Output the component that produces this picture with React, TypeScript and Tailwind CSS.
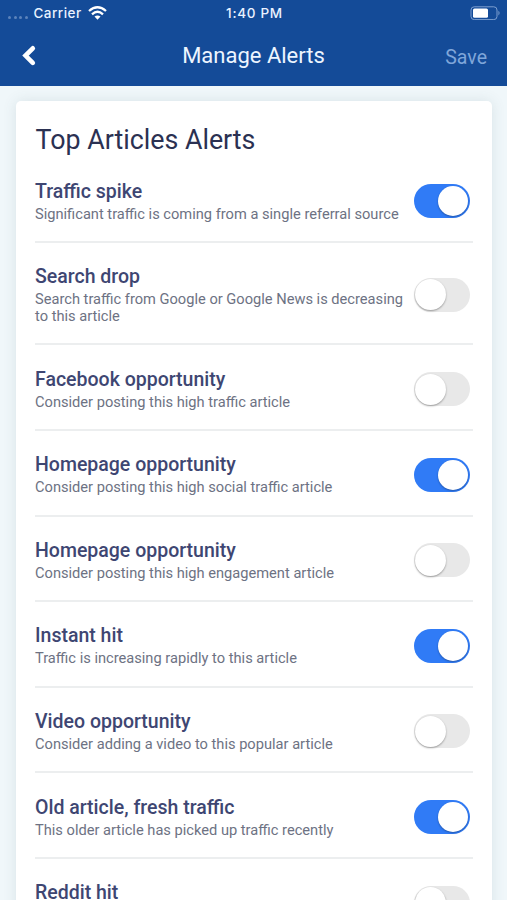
type Alert = { title: string; text: string; on: boolean };

const alerts: Alert[] = [
  { title: "Traffic spike", text: "Significant traffic is coming from a single referral source", on: true },
  { title: "Search drop", text: "Search traffic from Google or Google News is decreasing to this article", on: false },
  { title: "Facebook opportunity", text: "Consider posting this high traffic article", on: false },
  { title: "Homepage opportunity", text: "Consider posting this high social traffic article", on: true },
  { title: "Homepage opportunity", text: "Consider posting this high engagement article", on: false },
  { title: "Instant hit", text: "Traffic is increasing rapidly to this article", on: true },
  { title: "Video opportunity", text: "Consider adding a video to this popular article", on: false },
  { title: "Old article, fresh traffic", text: "This older article has picked up traffic recently", on: true },
  { title: "Reddit hit", text: "", on: false },
];

function Toggle({ on }: { on: boolean }) {
  return (
    <button
      role="switch"
      aria-checked={on}
      className={
        on
          ? "flex h-[34px] w-14 shrink-0 items-center justify-end rounded-full bg-[#307bf6] p-0.5"
          : "flex h-[34px] w-14 shrink-0 items-center justify-start rounded-full bg-[#e8e8e8] p-px"
      }
    >
      <span
        className={
          on
            ? "size-[30px] rounded-full bg-white shadow-[0_1px_2px_rgba(0,0,0,0.3)]"
            : "size-[31px] rounded-full bg-white shadow-[0_1px_2px_rgba(0,0,0,0.35)]"
        }
      />
    </button>
  );
}

function AlertRow({ alert, first }: { alert: Alert; first: boolean }) {
  return (
    <li
      className={
        first
          ? "flex items-center justify-between border-b-2 border-[#eceeef] pb-[17.9px]"
          : "flex items-center justify-between border-b-2 border-[#eceeef] pt-[22.1px] pb-[18.5px]"
      }
    >
      <div className="w-[372px]">
        <h2 className="text-[19.5px] leading-[24px] font-medium text-[#3e4672]">{alert.title}</h2>
        <p className="mt-[2px] min-h-[17px] text-[14.65px] leading-[17px] text-[#6d7283]">{alert.text}</p>
      </div>
      <div className={first ? "mr-[3px] pb-[2px]" : "mr-[3px]"}>
        <Toggle on={alert.on} />
      </div>
    </li>
  );
}

function StatusBar() {
  return (
    <div className="flex h-[26px] items-center justify-between pr-[6px] pl-2 text-[13.5px] font-medium text-[#eaf2ff]">
      <div className="flex w-[120px] items-center">
        <div className="mt-[9px] flex gap-[2.5px]">
          <i className="size-[3px] rounded-full bg-[#5c83bb]" />
          <i className="size-[3px] rounded-full bg-[#5c83bb]" />
          <i className="size-[3px] rounded-full bg-[#5c83bb]" />
          <i className="size-[3px] rounded-full bg-[#5c83bb]" />
        </div>
        <span className="ml-[6px] font-[Inter] tracking-[0.45px]">Carrier</span>
        <svg className="ml-[6px]" width="19" height="14" viewBox="0 0 19 14" fill="none" stroke="white" strokeWidth="2.3">
          <path d="M1 5Q9.500-2.500 18 5" />
          <path d="M4 8.300Q9.500 3.300 15 8.300" />
          <path d="M9.500 13.700L6.500 10.600Q9.500 8.200 12.500 10.600Z" fill="white" stroke="none" />
        </svg>
      </div>
      <span className="font-[Inter] tracking-[0.7px]">1:40 PM</span>
      <div className="flex w-[120px] justify-end">
        <svg width="31" height="14" viewBox="0 0 31 14">
          <rect x="1" y="0.800" width="26" height="12.800" rx="3.200" fill="none" stroke="#7d9fd0" />
          <rect x="3" y="2.500" width="15" height="9.200" rx="1.500" fill="white" />
          <path d="M28.500 4.800Q30.500 7 28.500 9.500Z" fill="#8aaad6" />
        </svg>
      </div>
    </div>
  );
}

export default function App() {
  return (
    <div className="h-[900px] overflow-hidden bg-[#f0f7fa] font-[Roboto,sans-serif]">
      <header className="h-[86px] bg-[#144b98]">
        <StatusBar />
        <div className="grid h-[60px] grid-cols-[1fr_auto_1fr] items-center px-5">
          <button aria-label="Back" className="justify-self-start">
            <svg
              width="17"
              height="22"
              viewBox="0 0 17 22"
              fill="none"
              stroke="white"
              strokeWidth="4.600"
              strokeLinecap="round"
            >
              <path d="M12.800 3.300L5.500 10.600L12.800 17.900" />
            </svg>
          </button>
          <h1 className="text-[22px] leading-[26px] text-[#edf5ff]">Manage Alerts</h1>
          <button className="mt-[3px] justify-self-end text-[19.5px] leading-6 text-[#7fa6da]">Save</button>
        </div>
      </header>
      <main className="px-[15.500px] pt-[15px]">
        <section className="h-[860px] rounded-[5px] bg-white px-5 pt-[22px] shadow-[0_0_14px_rgba(60,90,100,0.13)]">
          <h2 className="text-[26.8px] leading-[34px] text-[#2b3152]">Top Articles Alerts</h2>
          <ul className="mt-[23px] -ml-[0.5px] w-[437.5px]">
            {alerts.map((alert, i) => (
              <AlertRow key={i} alert={alert} first={i === 0} />
            ))}
          </ul>
        </section>
      </main>
    </div>
  );
}
